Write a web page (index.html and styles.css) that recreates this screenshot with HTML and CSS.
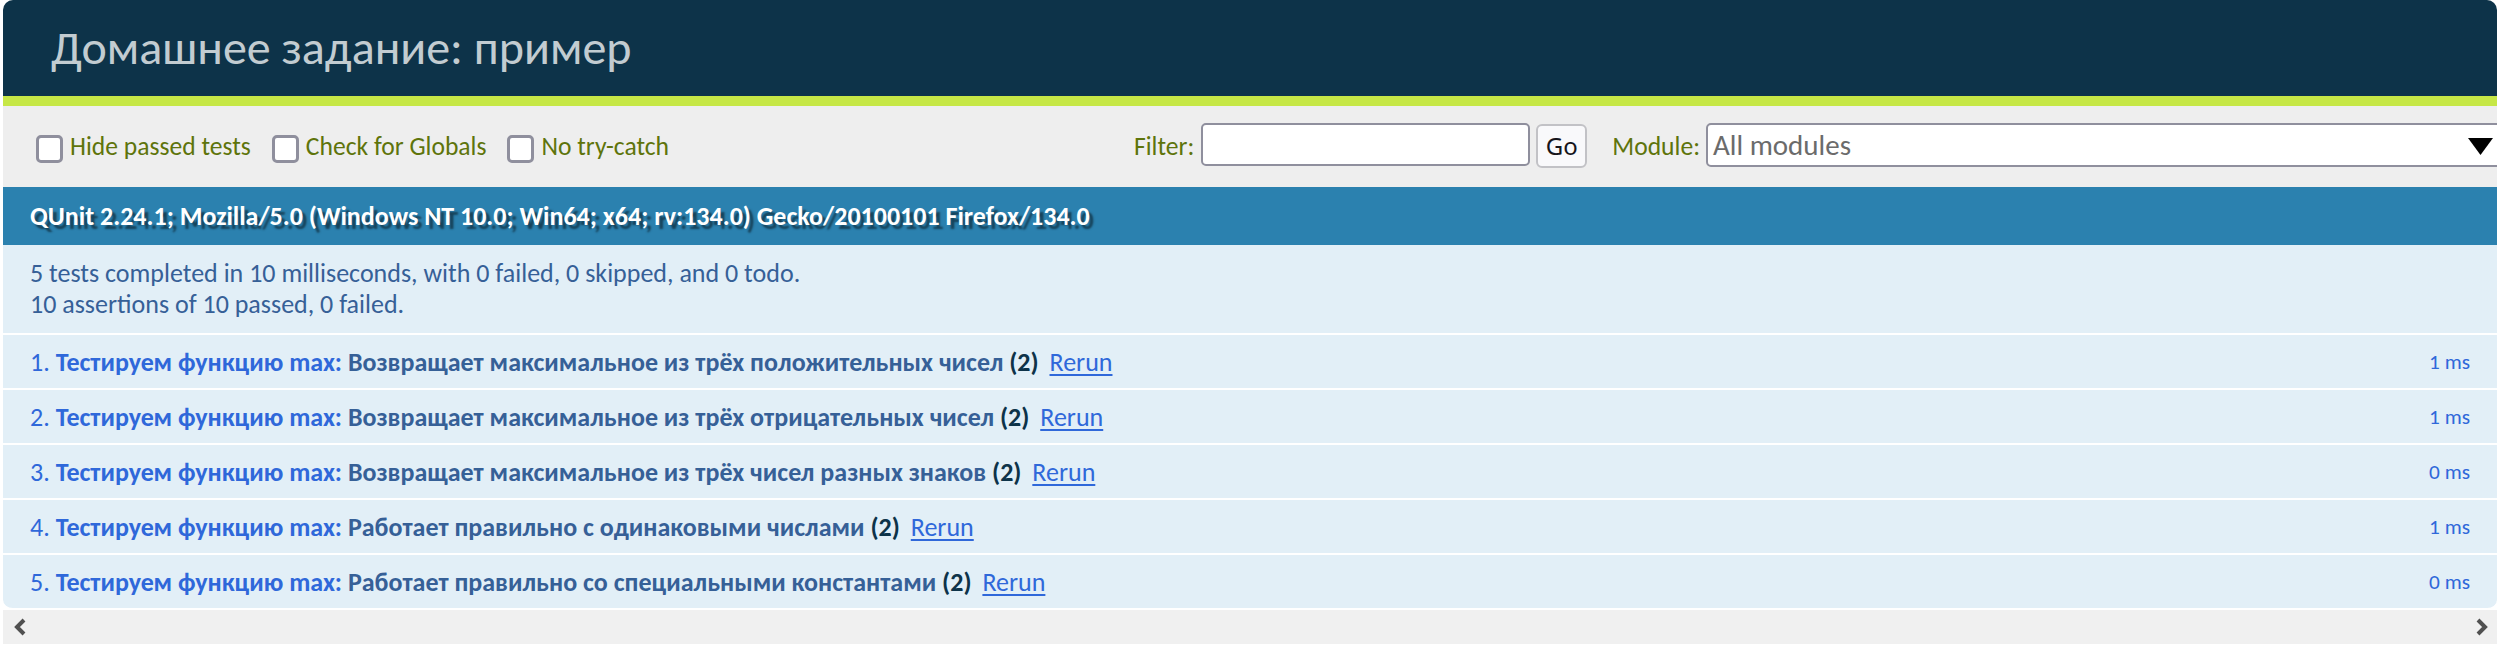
FILE: index.html
```html
<!DOCTYPE html>
<html lang="ru">
<head>
<meta charset="utf-8">
<title>Домашнее задание: пример</title>
<link rel="stylesheet" href="styles.css">
</head>
<body>
<div class="qunit">
  <h1 class="qunit-header">Домашнее задание: пример</h1>
  <div class="qunit-banner"></div>
  <div class="toolbar">
    <div class="toolbar-checks">
      <label class="check"><span class="checkbox"></span><span>Hide passed tests</span></label>
      <label class="check"><span class="checkbox"></span><span>Check for Globals</span></label>
      <label class="check"><span class="checkbox"></span><span>No try-catch</span></label>
    </div>
    <div class="toolbar-filters">
      <span class="filter-label">Filter:</span>
      <span class="filter-input"></span>
      <span class="go-button">Go</span>
      <span class="module-label">Module:</span>
      <span class="module-select"><span class="module-text">All modules</span><svg class="module-arrow" width="25" height="17" viewBox="0 0 25 17"><polygon points="0,0 25,0 12.5,17" fill="#000"/></svg></span>
    </div>
  </div>
  <h2 class="user-agent">QUnit 2.24.1; Mozilla/5.0 (Windows NT 10.0; Win64; x64; rv:134.0) Gecko/20100101 Firefox/134.0</h2>
  <p class="testresult">5 tests completed in 10 milliseconds, with 0 failed, 0 skipped, and 0 todo.<br>10 assertions of 10 passed, 0 failed.</p>
  <ol class="tests">
    <li class="test"><strong><span class="module-name">Тестируем функцию max:</span> <span class="test-name">Возвращает максимальное из трёх положительных чисел</span> <b class="counts">(2)</b></strong> <a class="rerun" href="#">Rerun</a><span class="runtime">1 ms</span></li>
    <li class="test"><strong><span class="module-name">Тестируем функцию max:</span> <span class="test-name">Возвращает максимальное из трёх отрицательных чисел</span> <b class="counts">(2)</b></strong> <a class="rerun" href="#">Rerun</a><span class="runtime">1 ms</span></li>
    <li class="test"><strong><span class="module-name">Тестируем функцию max:</span> <span class="test-name">Возвращает максимальное из трёх чисел разных знаков</span> <b class="counts">(2)</b></strong> <a class="rerun" href="#">Rerun</a><span class="runtime">0 ms</span></li>
    <li class="test"><strong><span class="module-name">Тестируем функцию max:</span> <span class="test-name">Работает правильно с одинаковыми числами</span> <b class="counts">(2)</b></strong> <a class="rerun" href="#">Rerun</a><span class="runtime">1 ms</span></li>
    <li class="test"><strong><span class="module-name">Тестируем функцию max:</span> <span class="test-name">Работает правильно со специальными константами</span> <b class="counts">(2)</b></strong> <a class="rerun" href="#">Rerun</a><span class="runtime">0 ms</span></li>
  </ol>
  <div class="hscroll">
    <svg class="chev" width="16" height="18" viewBox="0 0 16 18"><polyline points="11,2 4,9 11,16" fill="none" stroke="#505050" stroke-width="4"/></svg>
    <svg class="chev" width="16" height="18" viewBox="0 0 16 18"><polyline points="5,2 12,9 5,16" fill="none" stroke="#505050" stroke-width="4"/></svg>
  </div>
</div>
</body>
</html>
```
FILE: styles.css
```css
html, body {
  margin: 0;
  padding: 0;
  overflow: hidden;
  background: #fff;
}
body {
  padding-left: 3px;
  font-family: "Calibri", "Carlito", "Liberation Sans", sans-serif;
}
.qunit {
  width: 2494px;
}
.qunit-header {
  margin: 0;
  padding: 24px 0 24px 48px;
  font-size: 48px;
  line-height: 48px;
  font-weight: 400;
  color: #c2ccd1;
  background: #0d3349;
  border-radius: 10px 10px 0 0;
}
.qunit-banner {
  height: 10px;
  background: #c6e746;
}
.toolbar {
  height: 81px;
  box-sizing: border-box;
  background: #eee;
  padding-left: 33px;
  display: flex;
  align-items: center;
  overflow: hidden;
  color: #5e740b;
  font-size: 25.6px;
}
.toolbar-checks {
  display: flex;
  align-items: center;
  gap: 21px;
  flex: 0 0 auto;
}
.check {
  display: flex;
  align-items: center;
  gap: 7px;
}
.checkbox {
  width: 27px;
  height: 28px;
  box-sizing: border-box;
  border: 3px solid #8f8f9d;
  border-radius: 5px;
  background: #fff;
  margin-top: 5px;
}
.toolbar-filters {
  margin-left: auto;
  display: flex;
  align-items: center;
  flex: 0 0 auto;
  margin-right: -9px;
}
.filter-label {
  margin-right: 7px;
}
.filter-input {
  width: 329px;
  height: 43px;
  box-sizing: border-box;
  border: 2px solid #8f8f9d;
  border-radius: 5px;
  background: #fff;
  margin-bottom: 4px;
}
.go-button {
  margin-left: 6px;
  width: 51px;
  height: 44px;
  box-sizing: border-box;
  border: 2px solid #c2c2c6;
  border-radius: 6px;
  background: #f9f9fb;
  color: #15141a;
  font-family: "Noto Sans", "Open Sans", sans-serif;
  font-size: 24px;
  display: flex;
  align-items: center;
  justify-content: center;
  margin-bottom: 2px;
}
.module-label {
  margin-left: 25px;
  margin-right: 6px;
}
.module-select {
  width: 800px;
  height: 44px;
  box-sizing: border-box;
  border: 2px solid #8f8f9d;
  border-radius: 5px;
  background: #fff;
  display: flex;
  align-items: center;
  justify-content: space-between;
  padding: 0 11px 0 5px;
  margin-bottom: 4px;
}
.module-text {
  color: #6b6b6b;
  font-size: 29px;
}
.module-arrow {
  display: block;
  margin-top: 3px;
}
.user-agent {
  margin: 0;
  padding: 13px 27px;
  font-size: 26px;
  line-height: 32px;
  font-weight: 700;
  color: #fff;
  background: #2b81af;
  text-shadow: rgba(0, 0, 0, 0.5) 4px 4px 2px;
}
.testresult {
  margin: 0;
  padding: 13px 27px;
  font-size: 26px;
  line-height: 31px;
  color: #366097;
  background: #e2eff7;
  border-bottom: 2px solid #fff;
}
.tests {
  margin: 0;
  padding: 0;
  list-style: decimal inside;
}
.test {
  padding: 11px 27px 9px;
  font-size: 26px;
  line-height: 33px;
  color: #2f68da;
  background: #e2eff7;
  border-bottom: 2px solid #fff;
}
.test:last-child {
  border-radius: 0 0 10px 10px;
}
.test-name {
  color: #366097;
}
.counts {
  color: #0d3349;
}
.rerun {
  color: #2f68da;
  text-decoration: underline;
  text-decoration-thickness: 2px;
  text-underline-offset: 3px;
  padding-left: 5px;
}
.runtime {
  float: right;
  font-size: 21.3px;
}
.hscroll {
  height: 34px;
  background: #f0f0f0;
  display: flex;
  align-items: center;
  justify-content: space-between;
  padding: 0 8px 0 10px;
}
.chev {
  display: block;
}
```
